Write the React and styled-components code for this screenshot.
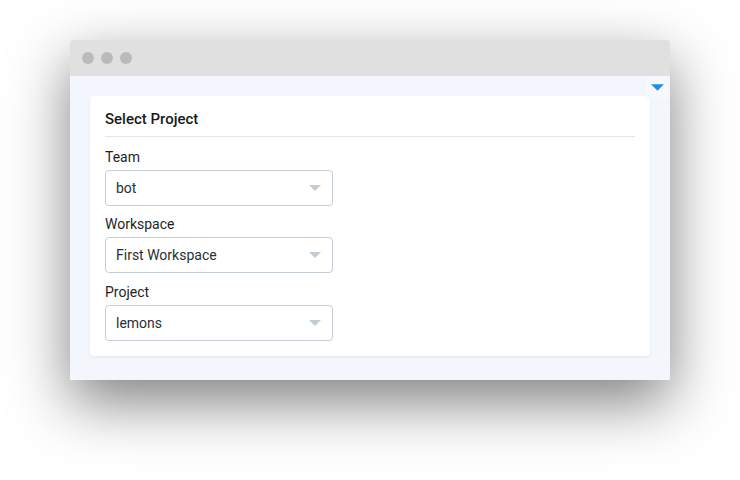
import React from "react";
import styled, { createGlobalStyle } from "styled-components";

const Global = createGlobalStyle`
  html, body { margin: 0; padding: 0; background: #fff; }
  body { font-family: Roboto, "Liberation Sans", sans-serif; }
`;

const Stage = styled.div`
  padding: 40px 70px;
  min-height: 100vh;
  box-sizing: border-box;
`;

const Window = styled.div`
  width: 600px;
  height: 340px;
  border-radius: 4px 4px 0 0;
  overflow: hidden;
  display: flex;
  flex-direction: column;
  box-shadow: 0 22px 60px rgba(0, 0, 0, 0.5);
  background: #f3f6fd;
`;

const TitleBar = styled.div`
  height: 36px;
  background: #e0e0e0;
  display: flex;
  align-items: center;
  gap: 7px;
  padding-left: 12px;
  flex-shrink: 0;
`;

const Dot = styled.span`
  width: 12px;
  height: 12px;
  border-radius: 50%;
  background: #bababa;
`;

const Body = styled.div`
  flex: 1;
  position: relative;
  padding: 20px 20px;
`;

const Toggle = styled.div`
  position: absolute;
  top: 0;
  right: 2px;
  width: 22px;
  height: 22px;
  display: flex;
  align-items: center;
  justify-content: center;
  background: #f6f8fe;
`;

const Card = styled.div`
  background: #fff;
  border-radius: 4px;
  box-shadow: 0 1px 3px rgba(30, 50, 90, 0.08);
  padding: 14px 15px 15px;
`;

const Heading = styled.div`
  font-size: 15px;
  font-weight: 500;
  color: #1a1a1a;
  line-height: 18px;
  padding-bottom: 8px;
  border-bottom: 1px solid #e3e6ea;
`;

const Label = styled.div`
  font-size: 14px;
  color: #1f1f1f;
  line-height: 17px;
  margin-top: ${(p) => p.$top}px;
  margin-bottom: 4px;
`;

const Select = styled.div`
  width: 228px;
  height: 36px;
  box-sizing: border-box;
  border: 1px solid #c5ced6;
  border-radius: 4px;
  display: flex;
  align-items: center;
  justify-content: space-between;
  padding: 0 11px 0 10px;
  font-size: 14px;
  color: #2a2f36;
`;

const Caret = ({ color, w = 12, h = 6 }) => (
  <svg width={w} height={h} viewBox="0 0 12 6">
    <path d="M0 0 L12 0 L6 6 Z" fill={color} />
  </svg>
);

const fields = [
  { label: "Team", value: "bot", top: 12 },
  { label: "Workspace", value: "First Workspace", top: 10 },
  { label: "Project", value: "lemons", top: 11 },
];

export default function App() {
  return (
    <>
      <Global />
      <Stage>
        <Window>
          <TitleBar>
            <Dot />
            <Dot />
            <Dot />
          </TitleBar>
          <Body>
            <Toggle>
              <Caret color="#1e8ff0" w={13} h={7} />
            </Toggle>
            <Card>
              <Heading>Select Project</Heading>
              {fields.map((f) => (
                <React.Fragment key={f.label}>
                  <Label $top={f.top}>{f.label}</Label>
                  <Select>
                    <span>{f.value}</span>
                    <Caret color="#c3cbd3" />
                  </Select>
                </React.Fragment>
              ))}
            </Card>
          </Body>
        </Window>
      </Stage>
    </>
  );
}
